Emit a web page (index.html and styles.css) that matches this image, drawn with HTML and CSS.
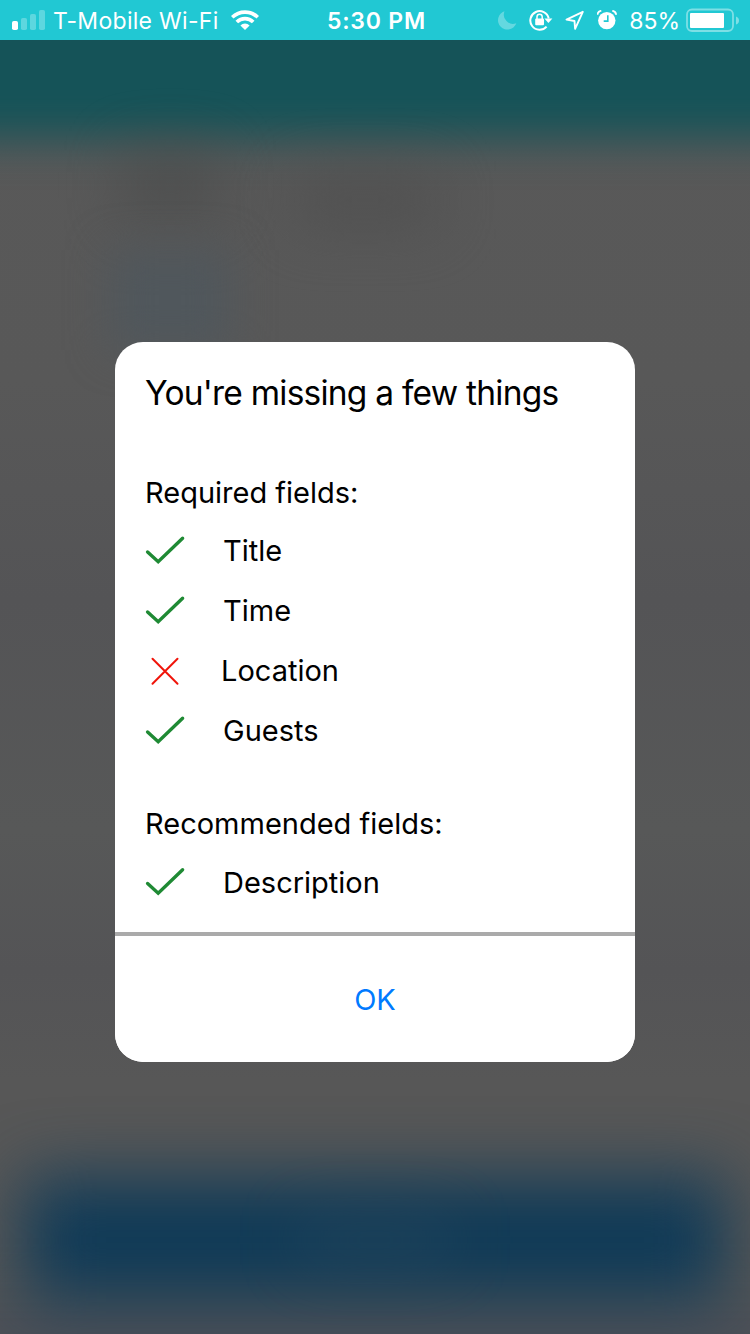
FILE: index.html
```html
<!DOCTYPE html>
<html lang="en">
<head>
<meta charset="utf-8">
<title>Missing fields</title>
<link rel="stylesheet" href="styles.css">
</head>
<body>
<div class="screen">
  <div class="backdrop">
    <div class="glow glow-header"></div>
    <div class="glow glow-title"></div>
    <div class="glow glow-subtitle"></div>
    <div class="glow glow-link"></div>
    <div class="glow glow-footer"></div>
    <div class="glow glow-button"></div>
    <div class="glow glow-label"></div>
  </div>
  <header class="status">
    <div class="status-left">
      <svg class="signal" width="34" height="22" viewBox="0 0 34 22" fill="#fff">
        <rect x="0" y="12" width="6" height="9" rx="1.8"/>
        <g opacity=".27"><rect x="9" y="9" width="6" height="12" rx="1.8"/><rect x="18" y="5" width="6" height="16" rx="1.8"/><rect x="27" y="1" width="6" height="20" rx="1.8"/></g>
      </svg>
      <span class="carrier">T-Mobile Wi-Fi</span>
      <svg class="wifi" width="28" height="20" viewBox="0 0 28 20">
        <g fill="none" stroke="#fff" stroke-width="3.7"><path d="M1.2 7.3a18.2 18.2 0 0 1 25.6 0"/><path d="M5.8 12a11.6 11.6 0 0 1 16.4 0"/></g>
        <path fill="#fff" d="M9.4 15.4a6.6 6.6 0 0 1 9.2 0L14 20z"/>
      </svg>
    </div>
    <span class="clock">5:30 PM</span>
    <div class="status-right">
      <svg width="19" height="20" viewBox="0 0 19 20"><path fill="#fff" opacity=".3" d="M6.5 1.2A9.4 9.4 0 1 0 18.3 13.2 9.2 9.2 0 0 1 6.5 1.2z"/></svg>
      <svg class="lock" width="24" height="22" viewBox="0 0 24 22">
        <path d="M17.6 17.6A9.3 9.3 0 1 1 19.7 9.5" fill="none" stroke="#fff" stroke-width="2"/>
        <path d="M15.4 9.5h8l-4 4.6z" fill="#fff"/>
        <rect x="6.2" y="9.6" width="8.8" height="6.6" rx=".9" fill="#fff"/>
        <path d="M8 10V7.8a2.6 2.6 0 0 1 5.2 0V10" fill="none" stroke="#fff" stroke-width="1.5"/>
      </svg>
      <svg class="arrow" width="20" height="20" viewBox="0 0 20 20"><path d="M17.8 1.8L1.5 9.6l8 1.4.6 7.8z" fill="none" stroke="#fff" stroke-width="1.9" stroke-linejoin="round"/></svg>
      <svg class="alarm" width="20" height="20" viewBox="0 0 20 20">
        <circle cx="9.8" cy="10.6" r="8.7" fill="#fff"/>
        <path d="M.5 4.8Q.6 1.7 4.3.7M15.3.7q3.7 1 3.8 4.1" fill="none" stroke="#fff" stroke-width="1.9"/>
        <path d="M10.8 5.3v5.8H6.7" fill="none" stroke="#21c8d3" stroke-width="1.6"/>
      </svg>
      <span class="percent">85%</span>
      <svg class="battery" width="54" height="24" viewBox="0 0 54 24">
        <rect x="1" y="1.5" width="46" height="21.5" rx="5" fill="none" stroke="#fff" stroke-opacity=".42" stroke-width="1.8"/>
        <rect x="4" y="5" width="34" height="15" rx="1" fill="#fff"/>
        <path d="M50 8.5q3 1 3 4t-3 4z" fill="#fff" opacity=".42"/>
      </svg>
    </div>
  </header>
  <main class="stage">
    <section class="dialog">
      <div class="content">
        <h1 class="title">You're missing a few things</h1>
        <h2 class="group required">Required fields:</h2>
        <ul class="list">
          <li class="row"><svg class="mark" viewBox="0 0 40 30"><path class="check" d="M2.6 16L13.2 25.7 37.6 2.2"/></svg><span>Title</span></li>
          <li class="row"><svg class="mark" viewBox="0 0 40 30"><path class="check" d="M2.6 16L13.2 25.7 37.6 2.2"/></svg><span>Time</span></li>
          <li class="row missing"><svg class="mark" viewBox="0 0 40 30"><path class="cross" d="M7.5 2.7L32.5 27.7M32.5 2.7L7.5 27.7"/></svg><span>Location</span></li>
          <li class="row"><svg class="mark" viewBox="0 0 40 30"><path class="check" d="M2.6 16L13.2 25.7 37.6 2.2"/></svg><span>Guests</span></li>
        </ul>
        <h2 class="group recommended">Recommended fields:</h2>
        <ul class="list extra">
          <li class="row"><svg class="mark" viewBox="0 0 40 30"><path class="check" d="M2.6 15.5L13.2 25.2 37.6 1.7"/></svg><span>Description</span></li>
        </ul>
      </div>
      <button class="ok">OK</button>
    </section>
  </main>
</div>
</body>
</html>
```
FILE: styles.css
```css
* { box-sizing: border-box; }
body { margin: 0; font-family: Inter, "Liberation Sans", sans-serif; }
svg { display: block; flex: none; }
h1, h2, ul { margin: 0; padding: 0; font-weight: 400; }
.screen { position: relative; display: flex; flex-direction: column; width: 750px; height: 1334px; overflow: hidden; background: #585858; }

/* Blurred form behind the dialog */
.backdrop { position: absolute; inset: 0; overflow: hidden; background: linear-gradient(#595959 0, #585858 380px, #545456 600px, #575858 830px, #545456 970px, #575757 1080px); }
.glow { position: absolute; }
.glow-header { left: -100px; right: -100px; top: -100px; height: 238px; background: #155358; filter: blur(22px); }
.glow-title { left: 120px; top: 150px; width: 100px; height: 70px; background: #484a4a; filter: blur(28px); opacity: .6; }
.glow-subtitle { left: 290px; top: 170px; width: 150px; height: 60px; background: #4d4d4d; filter: blur(28px); opacity: .6; }
.glow-link { left: 110px; top: 250px; width: 120px; height: 100px; background: #50575c; filter: blur(20px); }
.glow-footer { left: -100px; right: -100px; top: 1310px; height: 120px; background: #4b4f57; filter: blur(30px); }
.glow-button { left: 24px; top: 1178px; width: 702px; height: 124px; background: #0f3a57; filter: blur(34px); }
.glow-label { left: 300px; top: 1220px; width: 150px; height: 40px; background: #2c4a5e; filter: blur(30px); opacity: .5; }

.status { position: relative; display: grid; grid-template-columns: 1fr auto 1fr; align-items: center; height: 40px; padding: 0 10px 0 12px; background: #21c8d3; color: #fff; font-size: 23px; line-height: 40px; }
.status-left, .status-right { display: flex; align-items: center; }
.status-right { justify-content: flex-end; }
.carrier { margin-left: 7px; padding-top: 2px; line-height: 38px; width: 166px; letter-spacing: .3px; white-space: nowrap; }
.wifi { margin-left: 12px; }
.clock { padding: 2px 0 0 1px; line-height: 38px; font-weight: 600; letter-spacing: .8px; }
.lock, .arrow, .alarm { margin-left: 12px; }
.percent { margin: 0 6px 0 12px; padding-top: 2px; line-height: 38px; }

.stage { position: relative; display: flex; justify-content: center; padding-top: 302px; }
.dialog { display: flex; flex-direction: column; width: 520px; height: 720px; overflow: hidden; border-radius: 28px; background: #fff; color: #000; }
.content { display: flex; flex-direction: column; height: 594px; padding: 26px 30px 0; border-bottom: 4px solid #aaa; }
.title { font-size: 33.5px; line-height: 50px; letter-spacing: -.77px; white-space: nowrap; }
.group { font-size: 29px; line-height: 40px; white-space: nowrap; }
.required { margin-top: 55px; }
.recommended { margin-top: 43px; }
.list { display: flex; flex-direction: column; list-style: none; padding-top: 8px; }
.extra { padding-top: 9px; }
.row { display: flex; align-items: center; height: 60px; font-size: 29px; line-height: 60px; gap: 38px; }
.missing { gap: 36px; }
.mark { width: 40px; height: 30px; overflow: visible; }
.check { fill: none; stroke: #1f8a34; stroke-width: 3.4; stroke-linecap: round; }
.cross { fill: none; stroke: #f0140a; stroke-width: 2; stroke-linecap: round; }
.ok { flex: 1; border: 0; padding: 2px 0 0; background: #fff; color: #007aff; font: 400 29px/40px Inter, "Liberation Sans", sans-serif; }
```
